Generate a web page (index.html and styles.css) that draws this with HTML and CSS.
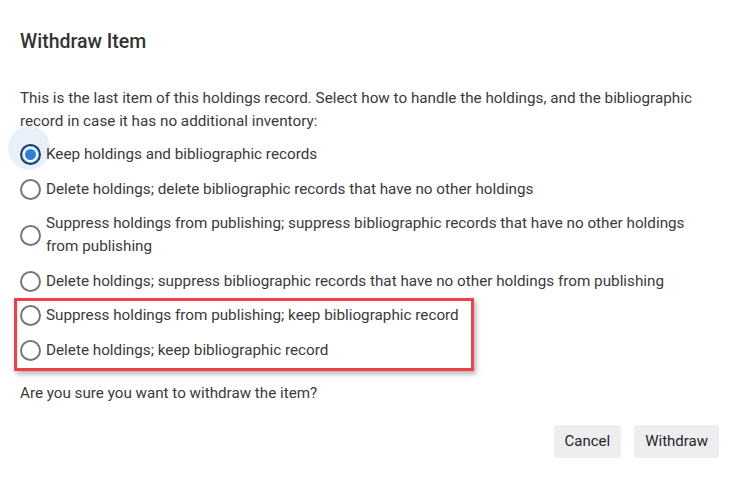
FILE: index.html
```html
<!DOCTYPE html>
<html lang="en">
<head>
    <meta charset="UTF-8">
    <meta name="viewport" content="width=device-width, initial-scale=1.0">
    <title>Withdraw Item</title>
    <link rel="stylesheet" href="styles.css">
</head>
<body>
    <div class="dialog">
        <h2 class="dialog-title">Withdraw Item</h2>
        <p class="intro">This is the last item of this holdings record. Select how to handle the holdings, and the bibliographic record in case it has no additional inventory:</p>

        <div class="options">
            <label class="option">
                <input type="radio" name="handling" checked>
                <span>Keep holdings and bibliographic records</span>
            </label>
            <label class="option">
                <input type="radio" name="handling">
                <span>Delete holdings; delete bibliographic records that have no other holdings</span>
            </label>
            <label class="option">
                <input type="radio" name="handling">
                <span>Suppress holdings from publishing; suppress bibliographic records that have no other holdings from publishing</span>
            </label>
            <label class="option">
                <input type="radio" name="handling">
                <span>Delete holdings; suppress bibliographic records that have no other holdings from publishing</span>
            </label>
            <div class="highlight">
                <label class="option">
                    <input type="radio" name="handling">
                    <span>Suppress holdings from publishing; keep bibliographic record</span>
                </label>
                <label class="option">
                    <input type="radio" name="handling">
                    <span>Delete holdings; keep bibliographic record</span>
                </label>
            </div>
        </div>

        <p class="question">Are you sure you want to withdraw the item?</p>

        <div class="actions">
            <button class="btn">Cancel</button>
            <button class="btn">Withdraw</button>
        </div>
    </div>
</body>
</html>
```

FILE: styles.css
```css
body {
    margin: 0;
    font-family: Roboto, "Noto Sans", sans-serif;
    color: #3a3a3a;
    background: #fff;
}
.dialog {
    padding: 30px 34px 0 20px;
}
.dialog-title {
    margin: 0;
    font-size: 19.5px;
    font-weight: 500;
    line-height: 24px;
    color: #333;
}
.intro {
    margin: 33px 0 0;
    font-size: 15.25px;
    line-height: 23px;
}
.options {
    margin-top: 4.5px;
}
.option {
    display: flex;
    align-items: center;
    gap: 5px;
    padding: 5.75px 0;
    font-size: 15.25px;
    line-height: 23px;
}
.option input {
    appearance: none;
    flex: none;
    width: 21px;
    height: 21px;
    margin: 0;
    border: 2px solid #777;
    border-radius: 50%;
    background: #fff;
    position: relative;
}
.option input:checked {
    border-color: #13406e;
    box-shadow: inset 0 0 0 1px #9cc2ea;
}
/* focus ripple, sits a little up and left of the dot */
.option input:checked::before {
    content: "";
    position: absolute;
    left: -14px;
    top: -20px;
    width: 42px;
    height: 44px;
    border-radius: 50%;
    background: rgba(222, 234, 246, 0.7);
    z-index: -1;
}
.option input:checked::after {
    content: "";
    position: absolute;
    left: 3px;
    top: 3px;
    width: 11px;
    height: 11px;
    border-radius: 50%;
    background: #2f7fd6;
}
.options .option:first-child {
    position: relative;
    z-index: 0;
}
.highlight {
    position: relative;
}
.highlight::after {
    content: "";
    position: absolute;
    left: -6px;
    top: -1px;
    width: 460px;
    bottom: -3px;
    box-sizing: border-box;
    border: 3px solid #ee4149;
    box-shadow: 2px 3px 5px rgba(0, 0, 0, 0.3);
    pointer-events: none;
}
.question {
    margin: 14px 0 0;
    font-size: 15.2px;
    line-height: 23px;
}
.actions {
    display: flex;
    justify-content: flex-end;
    gap: 13px;
    margin-top: 20px;
}
.btn {
    height: 33px;
    padding: 0 11px;
    border: none;
    border-radius: 3px;
    background: #eeeeee;
    color: #1f2530;
    font-family: Roboto, sans-serif;
    font-size: 15px;
}
```
